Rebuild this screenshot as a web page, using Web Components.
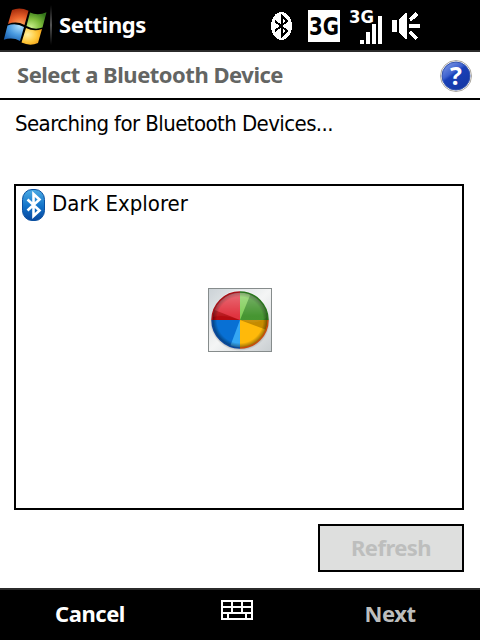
<!DOCTYPE html>
<html lang="en"><head><meta charset="utf-8"><title>Settings</title>
<style>html,body{margin:0;background:#fff}</style></head><body>
<settings-screen></settings-screen>
<script>
const define=(name,html,setup)=>customElements.define(name,class extends HTMLElement{
  connectedCallback(){if(this.shadowRoot)return;const r=this.attachShadow({mode:'open'});
    const t=document.createElement('template');t.innerHTML=html;r.append(t.content.cloneNode(true));if(setup)setup(this,r);}
});
/* Text label whose tracking is adjusted to a given width. */
define('fit-label',`<style>:host{display:block;white-space:nowrap;line-height:26px}span{display:inline-block}</style><span><slot></slot></span>`,(el,r)=>{
  const s=r.querySelector('span'),w=+el.getAttribute('fit');
  const n=r.querySelector('slot').assignedNodes({flatten:true}).map(x=>x.textContent).join('').length;
  if(n)s.style.letterSpacing=(w-s.getBoundingClientRect().width)/n+'px';
});
define('windows-flag',`<style>:host{display:block;width:47px;height:40px}svg{display:block}</style>
<svg width="47" height="40" viewBox="0 0 47 40"><defs>
<radialGradient id="r" cx=".6" cy="1" r="1"><stop offset="0" stop-color="#ffae62"/><stop offset=".5" stop-color="#e8602a"/><stop offset="1" stop-color="#a52c0c"/></radialGradient>
<radialGradient id="g" cx=".2" cy=".9" r="1"><stop offset="0" stop-color="#c8ee8c"/><stop offset=".5" stop-color="#7fbd3c"/><stop offset="1" stop-color="#33751a"/></radialGradient>
<radialGradient id="b" cx=".8" cy=".1" r="1.1"><stop offset="0" stop-color="#b0e2ff"/><stop offset=".5" stop-color="#4a9be0"/><stop offset="1" stop-color="#1458a8"/></radialGradient>
<radialGradient id="y" cx=".3" cy=".4" r=".9"><stop offset="0" stop-color="#fff0a0"/><stop offset=".5" stop-color="#ffc83a"/><stop offset="1" stop-color="#e88a08"/></radialGradient></defs>
<path d="M12 3Q20-.5 28.5 3.8L24.5 18Q17 13.8 8 17Z" fill="url(#r)"/>
<path d="M30 5.5Q38 9 46.5 5.2L42.5 20.5Q34.5 23.4 26.5 19Z" fill="url(#g)"/>
<path d="M7.5 18.5Q16 15.5 24 20L20 34Q12.5 29.8 3.8 32.8Z" fill="url(#b)"/>
<path d="M26 21Q34 25 42 22L38 36Q30 39.5 21.5 35.5Z" fill="url(#y)"/></svg>`);
define('status-icons',`<style>:host{display:block;width:152px;height:36px}svg{display:block}text{font-stretch:normal;font-family:"DejaVu Sans";font-weight:bold}</style>
<svg width="152" height="36" viewBox="270 8 152 36" fill="#fff" shape-rendering="crispEdges">
<ellipse cx="281.5" cy="26" rx="10.5" ry="14"/>
<path d="M275 21L287 31L281.5 37V15L287 21L275 31" fill="none" stroke="#000" stroke-width="2"/>
<path d="M308 10h32v32h-32z"/>
<text x="309" y="34.5" fill="#000" textLength="30" lengthAdjust="spacingAndGlyphs" font-size="24">3G</text>
<text x="349" y="22.5" textLength="25" lengthAdjust="spacingAndGlyphs" font-size="17">3G</text>
<path d="M360 40h4v4h-4zM366 32h4v12h-4zM372 24h4v20h-4zM378 16h4v28h-4z"/>
<path d="M392 20h5v12h-5zM399 20L405 13H407V39H405L399 32Z"/>
<path d="M410 20L417 13.5M409 26H420M410 32L417 39" fill="none" stroke="#fff" stroke-width="4"/></svg>`);
define('title-strip',`<style>:host{display:flex;align-items:center;height:50px;background:#000;border-bottom:2px solid #2b2b2b;color:#fff}
windows-flag{margin-top:4px}i{width:2px;height:40px;margin:0 7px 0 3px;background:linear-gradient(#000,#555,#000)}fit-label{width:88px;margin-top:-2px}status-icons{margin-left:123px;margin-top:2px}</style>
<windows-flag></windows-flag><i></i><fit-label fit="87"><slot></slot></fit-label><status-icons></status-icons>`);
define('help-button',`<style>:host{display:block}svg{display:block;overflow:visible}text{font:bold 25px "Open Sans",sans-serif}</style><svg width="32" height="32"><defs><linearGradient id="a" x2=".7" y2="1"><stop stop-color="#8aa2e8"/><stop offset=".42" stop-color="#3e62cf"/><stop offset=".5" stop-color="#1940b8"/><stop offset="1" stop-color="#1638a4"/></linearGradient></defs>
<circle cx="16" cy="16" r="15.5" fill="#fff" stroke="#aaa6a0"/><circle cx="16" cy="16" r="14" fill="url(#a)" stroke="#3454ae"/>
<text x="16" y="25" text-anchor="middle" fill="#fff">?</text></svg>`);
define('page-heading',`<style>:host{display:flex;align-items:center;justify-content:space-between;height:46px;border-bottom:2px solid #000;padding:0 8px 0 17px;color:#636563}fit-label{margin-top:-2px}help-button{margin-top:2px}</style><fit-label fit="266"><slot></slot></fit-label><help-button></help-button>`);
define('device-item',`<style>:host{display:flex;align-items:center;gap:6px;height:34px;padding:2px 0 0 5px}svg{display:block}fit-label{margin-top:-2px}</style>
<svg width="25" height="33"><defs><linearGradient id="a" x2="0" y2="1"><stop stop-color="#4cabe4"/><stop offset=".55" stop-color="#1272c8"/><stop offset="1" stop-color="#07479e"/></linearGradient></defs><rect x="1.5" y=".5" width="22" height="31" rx="9.5" ry="10" fill="url(#a)" stroke="#0a50a0"/><path d="M6.5 10.5L18.5 21.5L12.5 27V5L18.5 10.5L6.5 21.5" fill="none" stroke="#fff" stroke-width="2.6"/></svg><fit-label fit="136"><slot></slot></fit-label>`);
define('busy-wheel',`<style>:host{display:block;width:64px;height:64px}svg{display:block}</style><svg width="64" height="64"><defs>
<linearGradient id="bg" x2="1" y2="1"><stop stop-color="#cbd2d6"/><stop offset=".5" stop-color="#f4f5f5"/><stop offset="1" stop-color="#c9ced1"/></linearGradient>
<linearGradient id="s" x2="0" y2="1"><stop stop-color="#fff" stop-opacity=".35"/><stop offset=".8" stop-color="#fff" stop-opacity=".05"/></linearGradient>
<radialGradient id="d"><stop offset=".82" stop-opacity="0"/><stop offset="1" stop-opacity=".45"/></radialGradient>
<radialGradient id="sh"><stop offset=".8" stop-color="#333" stop-opacity=".8"/><stop offset="1" stop-color="#777" stop-opacity="0"/></radialGradient><clipPath id="c"><circle cx="32" cy="32" r="28"/></clipPath></defs>
<rect x=".5" y=".5" width="63" height="63" fill="url(#bg)" stroke="#868c8c"/><ellipse cx="32" cy="34" rx="30" ry="29" fill="url(#sh)"/>
<g clip-path="url(#c)"><path d="M32 32H0V0H32" fill="#df2936"/><path d="M32 32L4 21V32Z" fill="#b40b10"/><path d="M32 32V0H64V32Z" fill="#3d9027"/><path d="M32 32V0H45Z" fill="#7acb50"/><path d="M32 32H64V64H32Z" fill="#ffb90a"/><path d="M32 32H64V44Z" fill="#c58b00"/><path d="M32 32V64H0V32Z" fill="#0870d4"/><path d="M32 32V64H20Z" fill="#35a7f4"/></g>
<circle cx="32" cy="32" r="28" fill="url(#d)"/><path d="M5 29A27 27 0 0 1 59 29Q49 38 32 32Q16 26 5 29Z" fill="url(#s)"/>
<g fill="none" stroke-width="1.5"><path d="M4 32A28 28 0 0 1 32 4" stroke="#a61218"/><path d="M32 4A28 28 0 0 1 60 32" stroke="#28751b"/><path d="M60 32A28 28 0 0 1 32 60" stroke="#c84e0c"/><path d="M32 60A28 28 0 0 1 4 32" stroke="#0a479c"/></g></svg>`);
define('device-list',`<style>:host{display:grid;grid-template-rows:34px 1fr;height:322px;border:2px solid #000}busy-wheel{justify-self:center;margin:68px 0 0 2px}</style><slot></slot><busy-wheel></busy-wheel>`);
define('push-button',`<style>:host{display:flex;align-items:center;justify-content:center;width:142px;height:44px;border:2px solid #000;background:#dedfde;color:#bdbebd}fit-label{margin-top:-2px}</style><fit-label fit="80"><slot></slot></fit-label>`);
define('soft-keys',`<style>:host{display:grid;grid-template-columns:180px 1fr 180px;height:50px;background:#000;border-top:2px solid #2b2b2b;color:#fff;align-items:center;justify-items:center}::slotted(*){margin-top:-4px}::slotted([disabled]){color:#bdbebd}svg{display:block;margin:-10px 0 0 -6px}</style>
<slot name="left"></slot><svg width="32" height="20" fill="none" stroke="#fff" stroke-width="2" shape-rendering="crispEdges"><path d="M1 1H31V19H1ZM0 7H32M0 13H32M11 0V13M21 0V13M7 13V19M25 13V19"/></svg><slot name="right"></slot>`);
define('settings-screen',`<style>:host{display:flex;flex-direction:column;width:480px;height:640px;background:#fff;color:#000;font:22px "DejaVu Sans Condensed","DejaVu Sans",sans-serif;font-stretch:condensed;overflow:hidden}title-strip,page-heading,push-button,soft-keys{font-family:"Noto Sans",sans-serif;font-weight:bold;font-stretch:normal}main{flex:1;display:flex;flex-direction:column;padding:11px 16px 16px 14px}main>fit-label{margin:0 0 47px 1px}push-button{align-self:flex-end;margin-top:14px}</style>
<title-strip>Settings</title-strip><page-heading>Select a Bluetooth Device</page-heading>
<main><fit-label fit="318">Searching for Bluetooth Devices...</fit-label><device-list><device-item>Dark Explorer</device-item></device-list><push-button>Refresh</push-button></main>
<soft-keys><fit-label slot="left" fit="70">Cancel</fit-label><fit-label slot="right" fit="51" disabled>Next</fit-label></soft-keys>`);
</script></body></html>
